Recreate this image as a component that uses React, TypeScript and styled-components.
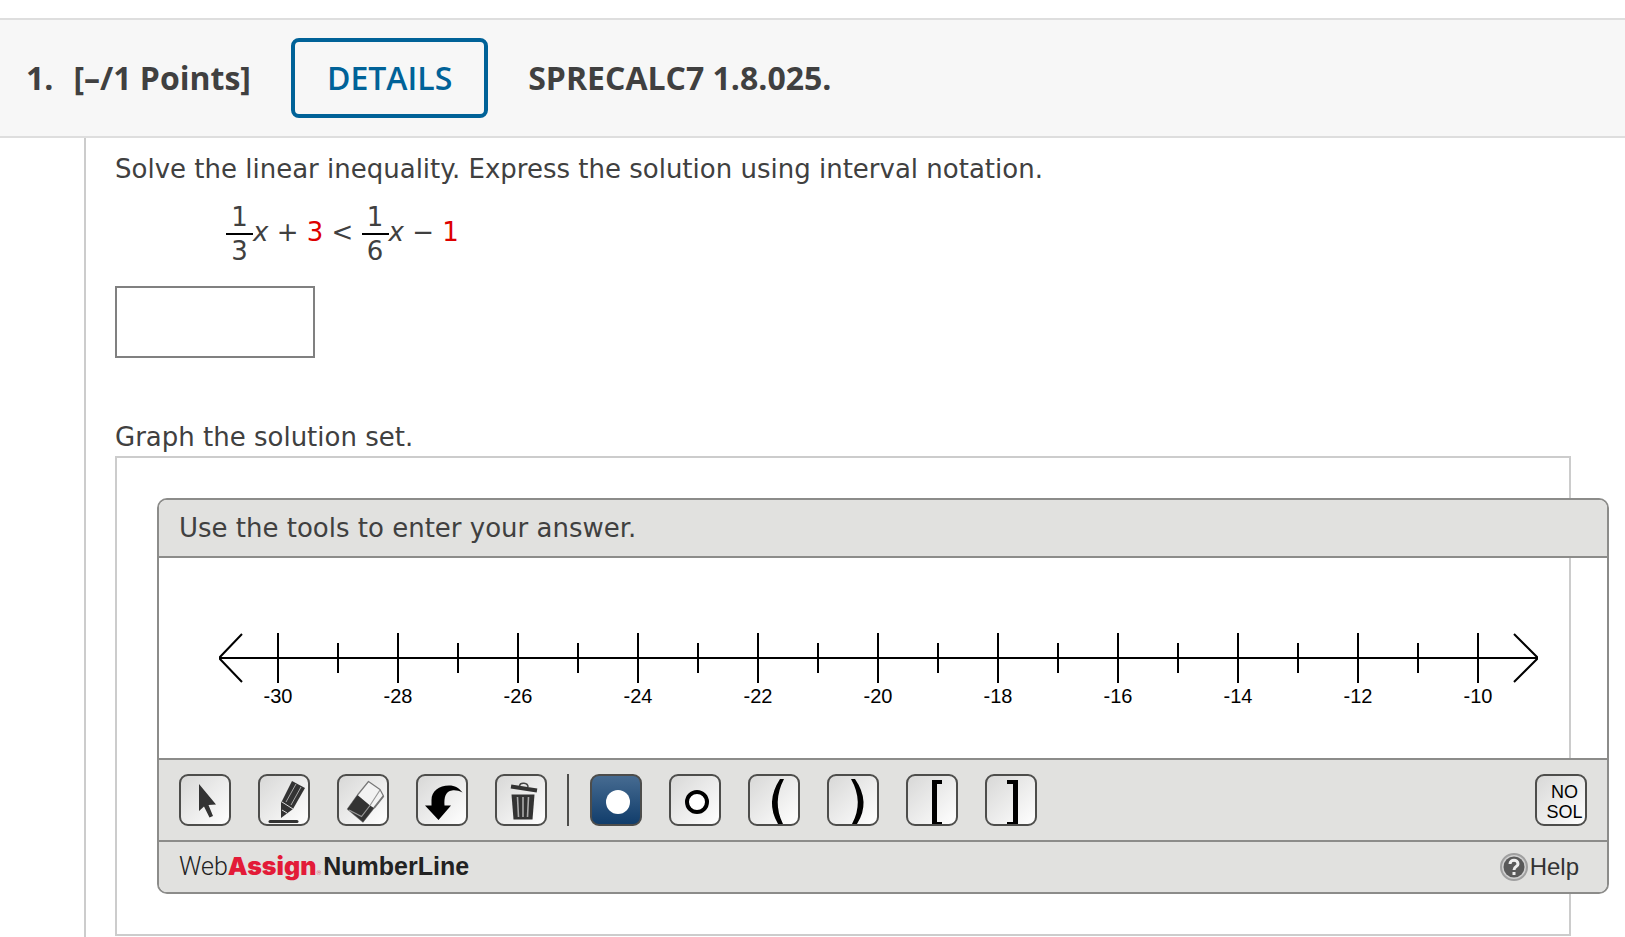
import React from "react";
import styled, { createGlobalStyle, css } from "styled-components";

const sans = `"DejaVu Sans", Verdana, sans-serif`;
const heading = `"Open Sans", sans-serif`;
const plain = `"Liberation Sans", Arial, sans-serif`;

const GlobalStyle = createGlobalStyle`
  *, *::before, *::after { box-sizing: border-box; }
  body { margin: 0; background: #fff; color: #404040; font-family: ${sans}; }
  p, h1, h2 { margin: 0; font-weight: inherit; }
`;

const Page = styled.main`
  padding-top: 18px;
`;

const Header = styled.header`
  display: flex;
  align-items: center;
  height: 120px;
  padding-left: 26px;
  background: #f7f7f7;
  border-top: 2px solid #dedede;
  border-bottom: 2px solid #dedede;
  font: 700 32px/44px ${heading};
`;

const Points = styled.h1`
  display: flex;
  gap: 20px;
  font-size: 32px;
  font-weight: 700;
`;

const DetailsButton = styled.button`
  height: 80px;
  margin: 0 40px;
  padding: 0 32px;
  border: 4px solid #006298;
  border-radius: 8px;
  background: transparent;
  color: #006298;
  font: 600 32px/44px ${heading};
`;

const Question = styled.section`
  margin-left: 84px;
  padding: 14px 54px 1px 29px;
  border-left: 2px solid #ccc;
  font-size: 26px;
  line-height: 34px;
`;

const Equation = styled.div`
  display: flex;
  align-items: center;
  height: 68px;
  margin: 12px 0 20px 111px;
`;

const Term = styled.span`
  white-space: pre;
`;

const Fraction = styled.span`
  display: grid;
  width: 27px;
  padding-top: 4px;
  line-height: 32px;
  text-align: center;
`;

const Numerator = styled.span`
  border-bottom: 2px solid #000;
`;

const Given = styled.span`
  color: #d00;
`;

const AnswerBox = styled.input`
  display: block;
  width: 200px;
  height: 72px;
  padding: 0 12px;
  border: 2px solid #808080;
  border-radius: 0;
  font: 26px ${sans};
`;

const GraphPrompt = styled.p`
  margin-top: 62px;
`;

const GraphFrame = styled.div`
  margin-top: 2px;
  padding: 40px 0 40px 40px;
  border: 2px solid #ccc;
`;

const Widget = styled.div`
  margin-right: -40px;
  border: 2px solid #8c8c8a;
  border-radius: 10px;
  overflow: hidden;
`;

const WidgetTitle = styled.h2`
  padding: 11px 20px;
  background: #e1e1df;
  border-bottom: 2px solid #8c8c8a;
  font-size: 26px;
`;

const Axis = styled.svg`
  display: block;
  width: 100%;
  height: 200px;
`;

const Toolbar = styled.div`
  display: flex;
  align-items: center;
  height: 84px;
  padding: 0 20px;
  background: #e1e1df;
  border-top: 2px solid #8c8c8a;
  border-bottom: 2px solid #8c8c8a;
`;

const ToolGroup = styled.div`
  display: flex;
  gap: 27px;
`;

const Separator = styled.span`
  width: 2px;
  height: 52px;
  margin: 0 21px 0 20px;
  background: #4d4d4b;
`;

const ToolButton = styled.button<{ $active?: boolean; $end?: boolean }>`
  width: 52px;
  height: 52px;
  padding: 0;
  border: 2px solid #4d4d4b;
  border-radius: 9px;
  background: linear-gradient(135deg, #d8d8d7, #fff);
  overflow: hidden;
  color: #000;
  font: 18px/20px ${plain};
  ${(p) => p.$active && css`background: linear-gradient(#466b91, #113d6b);`}
  ${(p) => p.$end && css`margin-left: auto; padding: 4px 0 0 7px;`}
`;

const ToolIcon = styled.svg`
  display: block;
  width: 48px;
  height: 48px;
`;

const Footer = styled.footer`
  display: flex;
  align-items: center;
  justify-content: space-between;
  height: 50px;
  padding: 0 28px 0 20px;
  background: #e1e1df;
`;

const Brand = styled.div`
  display: flex;
  align-items: baseline;
  padding-top: 4px;
  color: #222;
  font: 300 25px/32px Roboto, sans-serif;
`;

const BrandRed = styled.span`
  color: #e31b38;
  font: 900 25px/32px Inter, sans-serif;
`;

const Registered = styled.span`
  color: #e31b38;
  font-size: 6px;
`;

const Product = styled.span`
  margin-left: 2px;
  font: 700 25px/32px ${plain};
`;

const HelpLink = styled.a`
  display: flex;
  align-items: center;
  gap: 2px;
  color: #333;
  font: 24px/32px ${plain};
  text-decoration: none;
`;

const HelpIcon = styled.svg`
  width: 28px;
  height: 28px;
`;

const TICKS = Array.from({ length: 21 }, (_, i) => ({ value: i - 30, x: 119 + i * 60 }));

function NumberLine() {
  return (
    <Axis viewBox="0 0 1448 200" role="img" aria-label="Number line from -30 to -10">
      <g stroke="#000" strokeWidth="2" fill="none">
        <path d="M61 100H1379" />
        <path d="M83 76L61 99V101L83 124M1355 76L1378 99V101L1355 124" />
        {TICKS.map(({ value, x }) => (
          <path key={value} d={value % 2 === 0 ? `M${x} 75V125` : `M${x} 85V115`} />
        ))}
      </g>
      <g fontFamily="Liberation Sans, Arial, sans-serif" fontSize="20" textAnchor="middle">
        {TICKS.filter(({ value }) => value % 2 === 0).map(({ value, x }) => (
          <text key={value} x={x} y={145}>{value}</text>
        ))}
      </g>
    </Axis>
  );
}

const ICONS: Record<string, React.ReactNode> = {
  Select: <path d="M18 8V35L23 30.5L28.5 41.5L32 40L27.5 29L35 28.5Z" fill="#333" />,
  Draw: (
    <>
      <path d="M32 5L45 12L33 33L21 42V27Z" fill="#333" />
      <path d="M36 8L26 26M41 11L31 29" stroke="#aaa" strokeWidth="1" fill="none" />
      <path d="M22 26L33 33" stroke="#ddd" strokeWidth="1" />
      <path d="M22 34L27 37" stroke="#ddd" strokeWidth="1" />
      <path d="M10 45.500H37" stroke="#333" strokeWidth="3" strokeLinecap="round" />
    </>
  ),
  Erase: (
    <>
      <path d="M29.500 5.500L41 13.500L44.500 20L24 46L8.500 33L18.500 19Z" fill="#f2f2f2" stroke="#777" strokeWidth="1.200" strokeLinejoin="round" />
      <path d="M18.500 19L31 29.500L35 32L24 46L8.500 33Z" fill="#333" />
      <path d="M10 34L22.500 40.500L31 29.500L41 14" stroke="#999" strokeWidth="1.200" fill="none" />
      <path d="M35 32L44.500 20" stroke="#777" strokeWidth="2" />
    </>
  ),
  Undo: <path d="M44.500 16.500C41 12 37 9.500 31 9.500C21 9.500 13.500 15 13.500 24V29.500H7L20.500 44L33 29.500H26.500C26 21 27.500 15.500 34 14.500C38 14 41 15 44.500 16.500Z" />,
  Clear: (
    <>
      <path d="M14.500 18.500H37.500L35.500 43.500H16.500Z" fill="#333" />
      <path d="M20.500 21L21.500 41M26 21V41M31.500 21L30.500 41" stroke="#aaa" strokeWidth="1.600" />
      <path d="M14 10.500L40 14.500" stroke="#333" strokeWidth="4" />
      <path d="M22.500 10C23 6 31 6.500 31 11" stroke="#444" strokeWidth="1.500" fill="none" />
    </>
  ),
  "Closed point": <circle cx="26" cy="26" r="12" fill="#fff" />,
  "Open point": <circle cx="26" cy="26" r="10" fill="#fff" stroke="#000" strokeWidth="4" />,
  "Left parenthesis": <path d="M30 3H34Q22 26 33 48H28Q15 26 30 3Z" />,
  "Right parenthesis": <path d="M22 3H26Q42 26 28 48H23Q35 26 22 3Z" />,
  "Left bracket": <path d="M24 4H34V8H29V46H34V48H24Z" />,
  "Right bracket": <path d="M20 4H31V48H20V46H26V8H20Z" />,
};

const EDIT_TOOLS = ["Select", "Draw", "Erase", "Undo", "Clear"];
const POINT_TOOLS = [
  "Closed point",
  "Open point",
  "Left parenthesis",
  "Right parenthesis",
  "Left bracket",
  "Right bracket",
];

function Tool({ name, active }: { name: string; active?: boolean }) {
  return (
    <ToolButton type="button" aria-label={name} $active={active}>
      <ToolIcon viewBox="0 0 48 48" aria-hidden="true">{ICONS[name]}</ToolIcon>
    </ToolButton>
  );
}

export default function App() {
  return (
    <Page>
      <GlobalStyle />
      <Header>
        <Points>
          <span>1.</span>
          <span>[–/1 Points]</span>
        </Points>
        <DetailsButton type="button">DETAILS</DetailsButton>
        <span>SPRECALC7 1.8.025.</span>
      </Header>
      <Question>
        <p>Solve the linear inequality. Express the solution using interval notation.</p>
        <Equation>
          <Fraction><Numerator>1</Numerator><span>3</span></Fraction>
          <Term><i>x</i>{" + "}<Given>3</Given>{" < "}</Term>
          <Fraction><Numerator>1</Numerator><span>6</span></Fraction>
          <Term><i>x</i>{" − "}<Given>1</Given></Term>
        </Equation>
        <AnswerBox type="text" aria-label="Solution in interval notation" />
        <GraphPrompt>Graph the solution set.</GraphPrompt>
        <GraphFrame>
          <Widget>
            <WidgetTitle>Use the tools to enter your answer.</WidgetTitle>
            <NumberLine />
            <Toolbar>
              <ToolGroup>
                {EDIT_TOOLS.map((name) => <Tool key={name} name={name} />)}
              </ToolGroup>
              <Separator />
              <ToolGroup>
                {POINT_TOOLS.map((name, i) => <Tool key={name} name={name} active={i === 0} />)}
              </ToolGroup>
              <ToolButton type="button" $end>NO<br />SOL</ToolButton>
            </Toolbar>
            <Footer>
              <Brand>
                Web<BrandRed>Assign</BrandRed><Registered>®</Registered>
                <Product>NumberLine</Product>
              </Brand>
              <HelpLink href="#help">
                <HelpIcon viewBox="0 0 28 28" aria-hidden="true">
                  <circle cx="14" cy="14" r="13" fill="#d0d0d0" stroke="#a0a0a0" strokeWidth="2" />
                  <circle cx="14" cy="14" r="10.500" fill="#5a5a5a" />
                  <path d="M10 11C10 6 18 6 18 11C18 14 14 13 14 17M14 19V22" stroke="#eee" strokeWidth="3" fill="none" />
                </HelpIcon>
                Help
              </HelpLink>
            </Footer>
          </Widget>
        </GraphFrame>
      </Question>
    </Page>
  );
}
